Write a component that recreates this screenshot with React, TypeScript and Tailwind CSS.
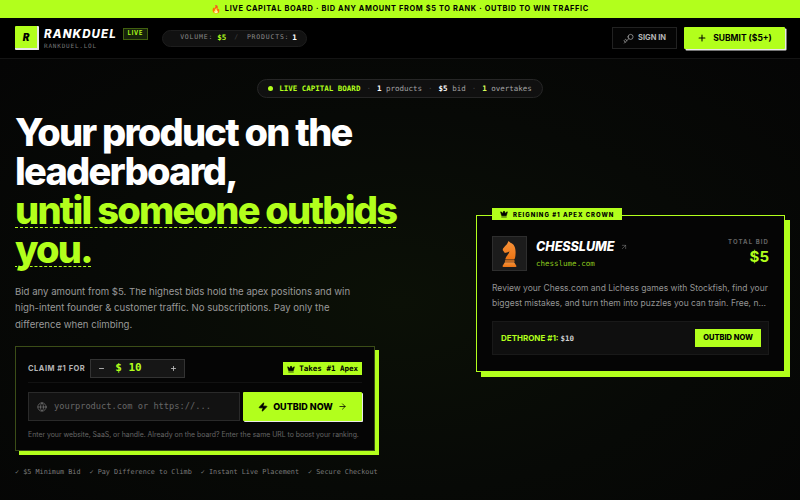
import React from "react";
import { Plus, Zap, ArrowRight, ArrowUpRight, Globe, Key, Crown, Minus } from "lucide-react";

const mono = "font-['DejaVu_Sans_Mono','Liberation_Mono',monospace]";

function Knight() {
  return (
    <svg viewBox="0 0 16 28" className="w-[15px] h-[26px]">
      <defs>
        <linearGradient id="kn" x1="0" y1="0" x2="0" y2="1">
          <stop offset="0" stopColor="#f7923a" />
          <stop offset="1" stopColor="#ec7414" />
        </linearGradient>
      </defs>
      <path d="M7 0L9 2C13 3 15 8 14.5 14C14.3 17 14 19 13 20L3.5 20C3.5 17 7.5 14 8 11C6.5 12.5 4 12.5 3 13L.8 10C.5 9 1 8 2 7C3.5 5 5 4 5.5 3Z" fill="url(#kn)" />
      <rect x="3" y="20.6" width="10.5" height="1.8" rx=".6" fill="#f08024" />
      <path d="M3 23H13L15.5 27Q15.5 28 14.5 28H1.5Q.5 28 .5 27Z" fill="url(#kn)" />
    </svg>
  );
}

export default function App() {
  return (
    <div className="w-[800px] h-[500px] overflow-hidden bg-[#050505] text-white font-['Inter',sans-serif] flex flex-col">
      <div className="h-[18px] shrink-0 bg-[#b2ff1c] text-black flex items-center justify-center gap-[3px] text-[7.4px] font-bold tracking-[0.63px]">
        <span className="text-[8px]">🔥</span>
        <span>LIVE CAPITAL BOARD · BID ANY AMOUNT FROM $5 TO RANK · OUTBID TO WIN TRAFFIC</span>
      </div>

      <header className="h-[41px] shrink-0 border-b border-[#141414] bg-black flex items-center justify-between pl-[15px] pr-[15px]">
        <div className="flex items-center">
          <div className="w-[24px] h-[24px] bg-[#b2ff1c] text-black rounded-[1px] border-r-2 border-b-2 border-[#e8e8e8] flex items-center justify-center text-[10px] font-black italic">R</div>
          <div className="ml-[5px] flex flex-col">
            <div className="flex items-center gap-[6px]">
              <span className="text-[11.5px] leading-[14px] font-extrabold italic tracking-[1.1px]">RANKDUEL</span>
              <span className="border border-[#41600f] bg-[#16220a] text-[#b2ff1c] text-[5.5px] font-bold px-[4px] h-[12px] flex items-center tracking-[0.8px]">LIVE</span>
            </div>
            <span className={`${mono} mt-[1px] text-[6px] leading-[8px] text-[#777777] tracking-[0.8px]`}>RANKDUEL.LOL</span>
          </div>
          <div className={`${mono} ml-[14px] h-[17px] pl-[17px] pr-[9px] rounded-full bg-[#111111] border border-[#1d1d1d] flex items-center text-[6.5px] tracking-[0.8px] text-[#8a8a8a]`}>
            <span>VOLUME:</span>
            <span className="ml-[4px] text-[#b2ff1c] text-[7.5px] tracking-normal font-bold">$5</span>
            <span className="mx-[8px] text-[#444444]">/</span>
            <span>PRODUCTS:</span>
            <span className="ml-[3px] text-white text-[7.5px] tracking-normal font-bold">1</span>
          </div>
        </div>
        <div className="flex items-center">
          <button className="h-[22px] w-[65px] border border-[#222222] bg-[#050505] flex items-center justify-center gap-[4px] text-[7.5px] font-bold text-[#b5b5b5]">
            <Key className="w-[11px] h-[11px] rotate-180" strokeWidth={1.5} />
            SIGN IN
          </button>
          <button className="ml-[7px] h-[22px] w-[101px] bg-[#b2ff1c] text-black rounded-[1px] shadow-[1.5px_1.5px_0_#e8e8e8] flex items-center justify-center gap-[6px] text-[8.5px] font-bold">
            <Plus className="w-[10px] h-[10px]" strokeWidth={2.5} />
            SUBMIT ($5+)
          </button>
        </div>
      </header>

      <main className="relative flex-1 bg-[radial-gradient(ellipse_at_50%_55%,#0b1006_0%,#070906_55%,#050505_100%)] flex flex-col">
        <div className="pt-[20px] flex justify-center">
          <div className={`${mono} h-[19px] px-[10px] rounded-full bg-[#101010] border border-[#262626] flex items-center gap-[6px] text-[7.5px] text-[#a3a3a3]`}>
            <span className="w-[5px] h-[5px] rounded-full bg-[#b2ff1c]" />
            <span className="text-[#b2ff1c] font-bold">LIVE CAPITAL BOARD</span>
            <span className="text-[#444444]">·</span>
            <span><b className="text-white">1</b> products</span>
            <span className="text-[#444444]">·</span>
            <span><b className="text-white">$5</b> bid</span>
            <span className="text-[#444444]">·</span>
            <span><b className="text-[#d8ff5c]">1</b> overtakes</span>
          </div>
        </div>

        <div className="flex justify-between pl-[15px] pr-[15px]">
          <div className="w-[384px] pt-[15px]">
            <h1 className="text-[38px] leading-[39px] font-extrabold tracking-[-1.75px]">
              Your product on the leaderboard,
              <br />
              <span className="text-[#b2ff1c] underline decoration-dashed decoration-[1px] underline-offset-[3px] decoration-[#b2ff1c]">until someone outbids you.</span>
            </h1>
            <p className="mt-[15px] w-[350px] text-[9.6px] leading-[16.4px] text-[#999999]">
              Bid any amount from $5. The highest bids hold the apex positions and win high-intent founder &amp; customer traffic. No subscriptions. Pay only the difference when climbing.
            </p>

            <div className="mt-[13px] w-[360px] h-[105px] border border-[#3b4d17] bg-[#050505] shadow-[4px_4px_0_#b2ff1c] pl-[12px] pr-[12px] flex flex-col">
              <div className="h-[36px] pt-[8px] flex items-center justify-between border-b border-[#121212]">
                <div className="flex items-center">
                  <span className="text-[7.5px] font-bold tracking-[0.5px] text-[#b5b5b5]">CLAIM #1 FOR</span>
                  <div className={`${mono} ml-[5px] w-[95px] h-[19px] bg-[#161616] border border-[#333333] flex items-center justify-between px-[7px] text-[11px] font-bold`}>
                    <Minus className="w-[7px] h-[7px] text-[#bbbbbb]" strokeWidth={3} />
                    <span className="flex-1 ml-[10px] text-[#b2ff1c]">$ 10</span>
                    <Plus className="w-[7px] h-[7px] text-[#bbbbbb]" strokeWidth={3} />
                  </div>
                </div>
                <div className={`${mono} h-[13px] px-[4px] bg-[#b2ff1c] text-black flex items-center gap-[4px] text-[7.5px] font-bold`}>
                  <Crown className="w-[8px] h-[8px]" fill="black" strokeWidth={2} />
                  Takes #1 Apex
                </div>
              </div>
              <div className="mt-[9px] flex justify-between">
                <div className="w-[212px] h-[29px] bg-[#121212] border border-[#2a2a2a] flex items-center pl-[8px] gap-[7px]">
                  <Globe className="w-[10px] h-[10px] text-[#808080]" strokeWidth={1.5} />
                  <span className={`${mono} text-[8.7px] text-[#666666]`}>yourproduct.com or https://...</span>
                </div>
                <button className="w-[119px] h-[29px] bg-[#b2ff1c] text-black rounded-[1px] shadow-[1px_1px_0_#e8e8e8] flex items-center justify-center gap-[5px] text-[9px] font-extrabold">
                  <Zap className="w-[10px] h-[10px]" fill="black" strokeWidth={2} />
                  OUTBID NOW
                  <ArrowRight className="w-[9px] h-[9px]" strokeWidth={2} />
                </button>
              </div>
              <p className="mt-[9px] text-[6.9px] leading-[10px] text-[#666666] whitespace-nowrap">
                Enter your website, SaaS, or handle. Already on the board? Enter the same URL to boost your ranking.
              </p>
            </div>

            <div className={`${mono} mt-[16px] flex gap-[9px] text-[6.8px] text-[#7a7a7a] whitespace-nowrap`}>
              <span>✓ $5 Minimum Bid</span>
              <span>✓ Pay Difference to Climb</span>
              <span>✓ Instant Live Placement</span>
              <span>✓ Secure Checkout</span>
            </div>
          </div>

          <div className="relative mt-[117px] w-[309px] h-[157px] border border-[#b2ff1c] bg-[#050505] shadow-[5px_5px_0_#b2ff1c] px-[15px] pt-[20px]">
            <div className="absolute -top-[8px] left-[15px] h-[12px] px-[8px] bg-[#b2ff1c] text-black flex items-center gap-[5px] text-[6px] font-extrabold tracking-[0.95px] whitespace-nowrap">
              <Crown className="w-[8px] h-[8px]" fill="black" strokeWidth={2} />
              REIGNING #1 APEX CROWN
            </div>
            <div className="flex justify-between">
              <div className="flex">
                <div className="w-[35px] h-[35px] bg-[#1c1c1c] border border-[#2e2e2e] flex items-center justify-center"><Knight /></div>
                <div className="ml-[9px]">
                  <div className="flex items-center gap-[5px] mt-[3px]">
                    <span className="text-[12.5px] leading-[16px] font-extrabold italic">CHESSLUME</span>
                    <ArrowUpRight className="w-[8px] h-[8px] text-[#888888]" strokeWidth={1.5} />
                  </div>
                  <div className={`${mono} mt-[3px] text-[7.5px] text-[#8fcc1e]`}>chesslume.com</div>
                </div>
              </div>
              <div className="text-right">
                <div className="mt-[1px] text-[6px] font-bold tracking-[1.1px] text-[#666666]">TOTAL BID</div>
                <div className="mt-[1px] text-[15px] leading-[20px] font-bold text-[#b2ff1c]">$5</div>
              </div>
            </div>
            <p className="mt-[10px] h-[29px] text-[8.5px] leading-[14.5px] text-[#949494] whitespace-nowrap">
              Review your Chess.com and Lichess games with Stockfish, find your
              <br />
              biggest mistakes, and turn them into puzzles you can train. Free, n...
            </p>
            <div className="mt-[11px] h-[34px] bg-[#0f0f0f] border border-[#191919] flex items-center justify-between pl-[8px] pr-[7px]">
              <span className="text-[8px] font-bold text-[#b2ff1c] whitespace-nowrap">DETHRONE #1: <span className={`${mono} text-[7.5px] text-[#d0d0d0]`}>$10</span></span>
              <button className="w-[66px] h-[18px] bg-[#b2ff1c] text-black text-[7.5px] font-extrabold">OUTBID NOW</button>
            </div>
          </div>
        </div>
      </main>
    </div>
  );
}
